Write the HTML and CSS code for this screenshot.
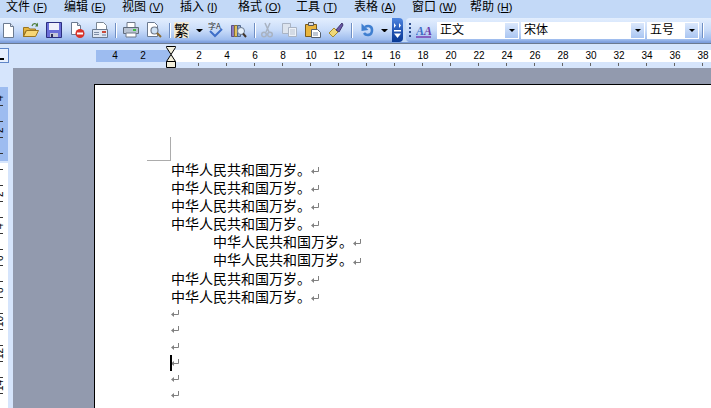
FILE: index.html
```html
<!DOCTYPE html>
<html lang="zh">
<head>
<meta charset="utf-8">
<title>Word</title>
<link rel="stylesheet" href="styles.css">
</head>
<body>
<svg class="defs" width="0" height="0"><defs>
<symbol id="ret" viewBox="0 0 8 8"><path d="M7.500 0v4.500H2" fill="none" stroke="#808080"/><path d="M0 4.500 3 2v5z" fill="#808080"/></symbol>
</defs></svg>
<div class="menubar">
  <span class="menu">文件<span class="key">(<u>F</u>)</span></span>
  <span class="menu">编辑<span class="key">(<u>E</u>)</span></span>
  <span class="menu">视图<span class="key">(<u>V</u>)</span></span>
  <span class="menu">插入<span class="key">(<u>I</u>)</span></span>
  <span class="menu">格式<span class="key">(<u>O</u>)</span></span>
  <span class="menu">工具<span class="key">(<u>T</u>)</span></span>
  <span class="menu">表格<span class="key">(<u>A</u>)</span></span>
  <span class="menu">窗口<span class="key">(<u>W</u>)</span></span>
  <span class="menu">帮助<span class="key">(<u>H</u>)</span></span>
</div>
<div class="toolbars">
  <div class="tb tb1">
    <svg class="ic ic-new" viewBox="0 0 16 16"><path d="M3.500 1.500h7l3 3v11h-10z" fill="#fff" stroke="#6b7a90"/><path d="M10.500 1.500v3h3" fill="#dfe6f2" stroke="#6b7a90"/></svg>
    <svg class="ic" viewBox="0 0 16 16"><path d="M0.500 5.500h5l1 1.500h6v2h-10l-2 6z" fill="#e5b53f" stroke="#9a7420"/><path d="M.5 14.500l3-6h12l-3 6z" fill="#f7d675" stroke="#9a7420"/><path d="M9 4c1-3 4-3 5-1" fill="none" stroke="#4f7f3f" stroke-width="1.200"/><path d="M15 .5v4h-3z" fill="#4f7f3f"/></svg>
    <svg class="ic" viewBox="0 0 16 16"><path d="M.5 .5h15v15H.5z" fill="#6a6ed8" stroke="#2c2f80"/><path d="M3 1h10v7H3z" fill="#eef0fb"/><path d="M4 11h8v4H4z" fill="#c6c9d8"/><path d="M5 12h2v3H5z" fill="#30305a"/></svg>
    <svg class="ic" viewBox="0 0 16 16"><path d="M2.500 .5h6l3 3v9h-9z" fill="#fff" stroke="#6b7a90"/><path d="M8.500 .5v3h3" fill="#dfe6f2" stroke="#6b7a90"/><circle cx="11" cy="11.500" r="4.500" fill="#d8332a"/><path d="M8 10.500h6v2H8z" fill="#fff"/></svg>
    <svg class="ic" viewBox="0 0 16 16"><path d="M4.500 .5h7l3 3v4h-10z" fill="#fff" stroke="#7b8794"/><path d="M.5 7.500h15v8H.5z" fill="#dfe7f3" stroke="#6b7a90"/><path d="M2 10h5v1H2zM2 12h5v1H2z" fill="#7f8ea6"/><path d="M10 9h4v2h-4z" fill="#c84a3a"/><path d="M10 12h4v2h-4z" fill="#a3b2ca"/></svg>
    <span class="sep"></span>
    <svg class="ic" viewBox="0 0 16 16"><path d="M4 .5h8v5H4z" fill="#fff" stroke="#707a8a"/><path d="M.5 5.500h15v6H.5z" fill="#b9c3d2" stroke="#5f6a7a"/><path d="M3 11h10v4H3z" fill="#fff" stroke="#707a8a"/><path d="M10 7h3v2h-3z" fill="#3fbf3f"/></svg>
    <svg class="ic" viewBox="0 0 16 16"><path d="M1.500 .5h7l3 3v11h-10z" fill="#fff" stroke="#6b7a90"/><circle cx="8.500" cy="8.500" r="3.500" fill="#cfe2f5" stroke="#707a8a" stroke-width="1.200"/><path d="M11 11l4 4" stroke="#8d6b2f" stroke-width="2"/></svg>
    <span class="sep"></span>
    <span class="fan">繁</span>
    <span class="drop"></span>
    <svg class="ic ic-spell" viewBox="0 0 16 16"><text x="0" y="7" class="spell">字A</text><path d="M2 9l5 5 7-7" fill="none" stroke="#3f6fc8" stroke-width="2"/></svg>
    <svg class="ic" viewBox="0 0 16 16"><path d="M.5 3.500h3v11h-3z" fill="#8c7cc0" stroke="#5b4f8a"/><path d="M3.500 3.500h3v11h-3z" fill="#e0c060" stroke="#8a7430"/><path d="M6.500 3.500h3v11h-3z" fill="#8ca8d8" stroke="#4f648a"/><circle cx="10" cy="9" r="3.500" fill="#e6f0fa" stroke="#6b7a90"/><path d="M12 11.500l3 3.500" stroke="#40342a" stroke-width="2"/></svg>
    <span class="sep"></span>
    <svg class="ic ic-cut" viewBox="0 0 16 16"><path d="M6 1l4 9M11 1L7 10" stroke="#a9b3c2" stroke-width="1.500" fill="none"/><circle cx="5" cy="12.500" r="2.300" fill="none" stroke="#a9b3c2" stroke-width="1.500"/><circle cx="11" cy="12.500" r="2.300" fill="none" stroke="#a9b3c2" stroke-width="1.500"/></svg>
    <svg class="ic" viewBox="0 0 16 16"><path d="M.5 1.500h8v10h-8z" fill="#dde4ee" stroke="#aab4c4"/><path d="M6.500 5.500h8v9h-8z" fill="#eef2f8" stroke="#aab4c4"/><path d="M8 8h5M8 10h5M8 12h5" stroke="#b9c3d2"/></svg>
    <svg class="ic" viewBox="0 0 16 16"><path d="M.5 2.500h11v12H.5z" fill="#e9b53c" stroke="#7a5a1a"/><path d="M3.500 .5h5v3h-5z" fill="#d8dce4" stroke="#555"/><path d="M6.500 7.500h6l3 3v5h-9z" fill="#fff" stroke="#55606f"/><path d="M8 11h5M8 13h5" stroke="#8090a8"/></svg>
    <svg class="ic" viewBox="0 0 16 16"><path d="M1 11l5-5 4 4-5 5z" fill="#f0d878" stroke="#a48a30"/><path d="M8 8l3 2 4-7-1-2z" fill="#6a5aa8" stroke="#40366e"/><path d="M2 12l3 3" stroke="#a48a30"/></svg>
    <span class="sep"></span>
    <svg class="ic ic-undo" viewBox="0 0 16 16"><path d="M4 11c2 3 8 3 8-3 0-4-4-5-7-3" fill="none" stroke="#3f7fd0" stroke-width="2.600"/><path d="M1.500 1.500l0 7.500 7-1z" fill="#3f7fd0"/></svg>
    <span class="drop drop-undo"></span>
    <div class="chev">
      <svg class="chev-top" viewBox="0 0 8 5"><path d="M0 0l2 2.500L0 5zM5 0l2 2.500L5 5z" fill="#fff"/></svg>
      <svg class="chev-bot" viewBox="0 0 8 9"><path d="M0 0h7v1.500H0z" fill="#fff"/><path d="M0 3.500h7L3.500 8z" fill="#fff"/></svg>
    </div>
  </div>
  <div class="tb tb2">
    <span class="grip"></span>
    <svg class="ic ic-style" viewBox="0 0 16 16"><text x="0" y="13" class="aa"><tspan class="aa1">A</tspan><tspan class="aa2">A</tspan></text><path d="M0 15h15" stroke="#7a3fb0" stroke-width="1.500"/></svg>
    <div class="combo c-style"><span class="ctext">正文</span><span class="cbtn"></span></div>
    <div class="combo c-font"><span class="ctext">宋体</span><span class="cbtn"></span></div>
    <div class="combo c-size"><span class="ctext">五号</span><span class="cbtn"></span></div>
    <span class="sep sep-end"></span>
  </div>
</div>
<div class="hrule-row">
  <span class="tabsel"><span class="tabmark"></span></span>
  <div class="hruler">
    <span class="cell"><b>4</b></span>
    <span class="cell"><b>2</b></span>
    <span class="cell"><b></b></span>
    <span class="cell"><b>2</b><i></i></span>
    <span class="cell"><b>4</b><i></i></span>
    <span class="cell"><b>6</b><i></i></span>
    <span class="cell"><b>8</b><i></i></span>
    <span class="cell"><b>10</b><i></i></span>
    <span class="cell"><b>12</b><i></i></span>
    <span class="cell"><b>14</b><i></i></span>
    <span class="cell"><b>16</b><i></i></span>
    <span class="cell"><b>18</b><i></i></span>
    <span class="cell"><b>20</b><i></i></span>
    <span class="cell"><b>22</b><i></i></span>
    <span class="cell"><b>24</b><i></i></span>
    <span class="cell"><b>26</b><i></i></span>
    <span class="cell"><b>28</b><i></i></span>
    <span class="cell"><b>30</b><i></i></span>
    <span class="cell"><b>32</b><i></i></span>
    <span class="cell"><b>34</b><i></i></span>
    <span class="cell"><b>36</b><i></i></span>
    <span class="cell"><b>38</b><i></i></span>
  </div>
  <svg class="marker" viewBox="0 0 10 22"><path d="M.5 .5h9v1L5 8.500.5 1.500z" fill="#f3efdc" stroke="#000"/><path d="M5 8.500l4.500 7v6h-9v-6z" fill="#f3efdc" stroke="#000"/><path d="M.5 15.500h9" stroke="#000"/></svg>
</div>
<div class="work">
  <div class="vruler">
    <div class="vstrip">
      <span class="vcell vfirst"><em></em><s>4</s><em></em></span>
      <span class="vcell"><em></em><s>2</s><em></em></span>
      <span class="vcell"><em></em><s></s><em></em></span>
      <span class="vcell"><em></em><s>2</s><em></em></span>
      <span class="vcell"><em></em><s>4</s><em></em></span>
      <span class="vcell"><em></em><s>6</s><em></em></span>
      <span class="vcell"><em></em><s>8</s><em></em></span>
      <span class="vcell"><em></em><s>10</s><em></em></span>
      <span class="vcell"><em></em><s>12</s><em></em></span>
      <span class="vcell"><em></em><s>14</s><em></em></span>
    </div>
  </div>
  <div class="desk">
    <div class="page">
      <div class="crop"></div>
      <p class="line">中华人民共和国万岁。<svg class="ret"><use href="#ret"/></svg></p>
      <p class="line">中华人民共和国万岁。<svg class="ret"><use href="#ret"/></svg></p>
      <p class="line">中华人民共和国万岁。<svg class="ret"><use href="#ret"/></svg></p>
      <p class="line">中华人民共和国万岁。<svg class="ret"><use href="#ret"/></svg></p>
      <p class="line indent">中华人民共和国万岁。<svg class="ret"><use href="#ret"/></svg></p>
      <p class="line indent">中华人民共和国万岁。<svg class="ret"><use href="#ret"/></svg></p>
      <p class="line">中华人民共和国万岁。<svg class="ret"><use href="#ret"/></svg></p>
      <p class="line">中华人民共和国万岁。<svg class="ret"><use href="#ret"/></svg></p>
      <p class="line empty"><svg class="ret"><use href="#ret"/></svg></p>
      <p class="line empty"><svg class="ret"><use href="#ret"/></svg></p>
      <p class="line empty"><svg class="ret"><use href="#ret"/></svg></p>
      <p class="line empty"><span class="caret"></span><svg class="ret"><use href="#ret"/></svg></p>
      <p class="line empty"><svg class="ret"><use href="#ret"/></svg></p>
      <p class="line empty"><svg class="ret"><use href="#ret"/></svg></p>
    </div>
  </div>
</div>
</body>
</html>
```
FILE: styles.css
```css
* { box-sizing: border-box; }
html, body { margin: 0; padding: 0; }
body {
  width: 711px; height: 408px; overflow: hidden; background: #d6e5fc;
  font-family: "Noto Sans CJK SC", "Liberation Sans", sans-serif; color: #000;
}
.defs { display: block; height: 0; }

.menubar { display: flex; height: 18px; padding-left: 6px; background: #c3d9f7; font-size: 12px; line-height: 12px; }
.menu { width: 58px; white-space: nowrap; }
.key { font-family: "Liberation Sans", sans-serif; font-size: 11px; margin-left: 3px; }

.toolbars { display: flex; gap: 4px; height: 26px; background: linear-gradient(#c3d9f7 0 24px, #7d9edc 24px 25px, #6c7a90 25px); overflow: hidden; }
.tb { display: flex; align-items: center; gap: 7px; height: 24px; background: linear-gradient(#e3eefe, #c9dcf9 50%, #9fbdee 90%, #7f9fdd); }
.tb1 { flex: none; width: 402px; border-radius: 0 4px 4px 0; }
.tb2 { flex: 1; min-width: 0; gap: 0; padding-left: 3px; border-radius: 4px 0 0 4px; }
.ic { width: 16px; height: 16px; flex: none; }
.sep { width: 1px; height: 15px; background: #6f8fc4; flex: none; box-shadow: 1px 0 0 #fff; }
.fan { width: 15px; height: 16px; margin-left: -3px; background: #f1ead6; font-size: 15px; line-height: 15px; font-weight: 400; text-align: center; flex: none; }
.drop { width: 7px; height: 0; flex: none; border-style: solid; border-color: #000 transparent transparent; border-width: 3px 3.500px 0; }
.ic-spell { margin-left: -2px; }
.spell { font-size: 8px; font-family: "Noto Sans CJK SC", sans-serif; fill: #333; }
.ic-cut { margin-left: -3px; }
.ic-undo { margin-left: 1px; }
.drop-undo { margin-left: -2px; }
.chev { flex: none; margin-left: -3px; width: 11px; height: 24px; background: linear-gradient(#4f86e0, #1d4fae 60%, #0a3a96); border-radius: 0 4px 4px 0; display: flex; flex-direction: column; align-items: center; justify-content: space-between; padding: 5px 0 3px; }
.chev-top { width: 8px; height: 5px; }
.chev-bot { width: 8px; height: 9px; }

.grip { width: 2px; height: 14px; margin-right: 5px; background: repeating-linear-gradient(#2f4f8f 0 2px, transparent 2px 4px); }
.ic-style { margin-right: 5px; }
.aa { font-family: "Liberation Serif", serif; font-style: italic; font-weight: 700; font-size: 12px; }
.aa1 { fill: #3b6fc4; }
.aa2 { fill: #6a3aa8; }
.combo { display: flex; height: 17px; background: #fff; margin-right: 2px; }
.c-style { width: 82px; }
.c-font { width: 124px; }
.c-size { width: 52px; margin-right: 3px; }
.ctext { flex: 1; padding-left: 3px; font-size: 12px; line-height: 13px; }
.cbtn { width: 13px; height: 15px; margin: 1px 1px 0 0; display: flex; align-items: center; justify-content: center; background: linear-gradient(#dbe8fc, #a9c5f2); }
.cbtn::after { content: ""; border: 3px solid transparent; border-top-color: #000; border-bottom: 0; }

.hrule-row { position: relative; height: 24px; padding: 6px 0 0 96px; }
.tabsel { position: absolute; left: -1px; top: 4px; width: 10px; height: 15px; border: 1px solid #5f86c8; background: #e8f0fe; }
.tabmark { position: absolute; left: 0; bottom: 2px; width: 4px; height: 2px; background: #000; }
.hruler { display: flex; height: 12px; padding-left: 5px; background: linear-gradient(90deg, #9dbcf0 74px, #fff 74px); }
.cell { flex: none; width: 28px; height: 16px; display: flex; flex-direction: column; align-items: center; font-family: "Liberation Sans", sans-serif; font-size: 10px; }
.cell b { display: block; height: 13px; line-height: 12px; font-weight: 400; }
.cell i { display: block; width: 1px; height: 3px; margin-right: 1px; background: #666; }
.marker { position: absolute; left: 165.500px; top: 2px; width: 10px; height: 22px; }

.work { display: flex; height: 340px; }
.vruler { width: 13px; flex: none; padding-top: 13px; background: #d6e5fc; overflow: hidden; }
.vstrip { width: 8px; height: 327px; background: linear-gradient(transparent 6px, #9dbcf0 6px 80px, #d6e5fc 80px 82px, #fff 82px); display: flex; flex-direction: column; }
.vcell { flex: none; width: 8px; height: 32px; display: flex; flex-direction: column; align-items: flex-start; justify-content: space-between; }
.vcell em { display: block; width: 3px; height: 1px; margin-top: 8px; background: #333; }
.vcell em:last-child { margin-top: 0; margin-bottom: 7px; }
.vfirst em:first-child { visibility: hidden; }
.vcell s { display: block; height: 10px; width: 8px; text-decoration: none; writing-mode: vertical-rl; transform: rotate(180deg) translateX(4px); font-family: "Liberation Sans", sans-serif; font-size: 10px; line-height: 8px; text-align: center; }

.desk { flex: 1; min-width: 0; background: #929aae; padding: 16px 0 0 81px; overflow: hidden; }
.page { height: 324px; background: #fff; border-left: 1px solid #000; border-top: 1px solid #000; padding: 52px 0 0 52px; }
.crop { width: 24px; height: 24px; margin-bottom: -1.500px; border-right: 1px solid #acacac; border-bottom: 1px solid #acacac; }
.line { position: relative; margin: 0 0 0 24px; height: 18.200px; line-height: 18.200px; font-size: 14px; white-space: nowrap; display: flex; align-items: center; }
.indent { margin-left: 66px; }
.empty { height: 16.200px; line-height: 16.200px; }
.ret { width: 8px; height: 8px; flex: none; align-self: flex-end; margin-bottom: 3px; }
.caret { position: absolute; left: -1px; top: 1px; width: 2px; height: 16px; background: #000; }
```
